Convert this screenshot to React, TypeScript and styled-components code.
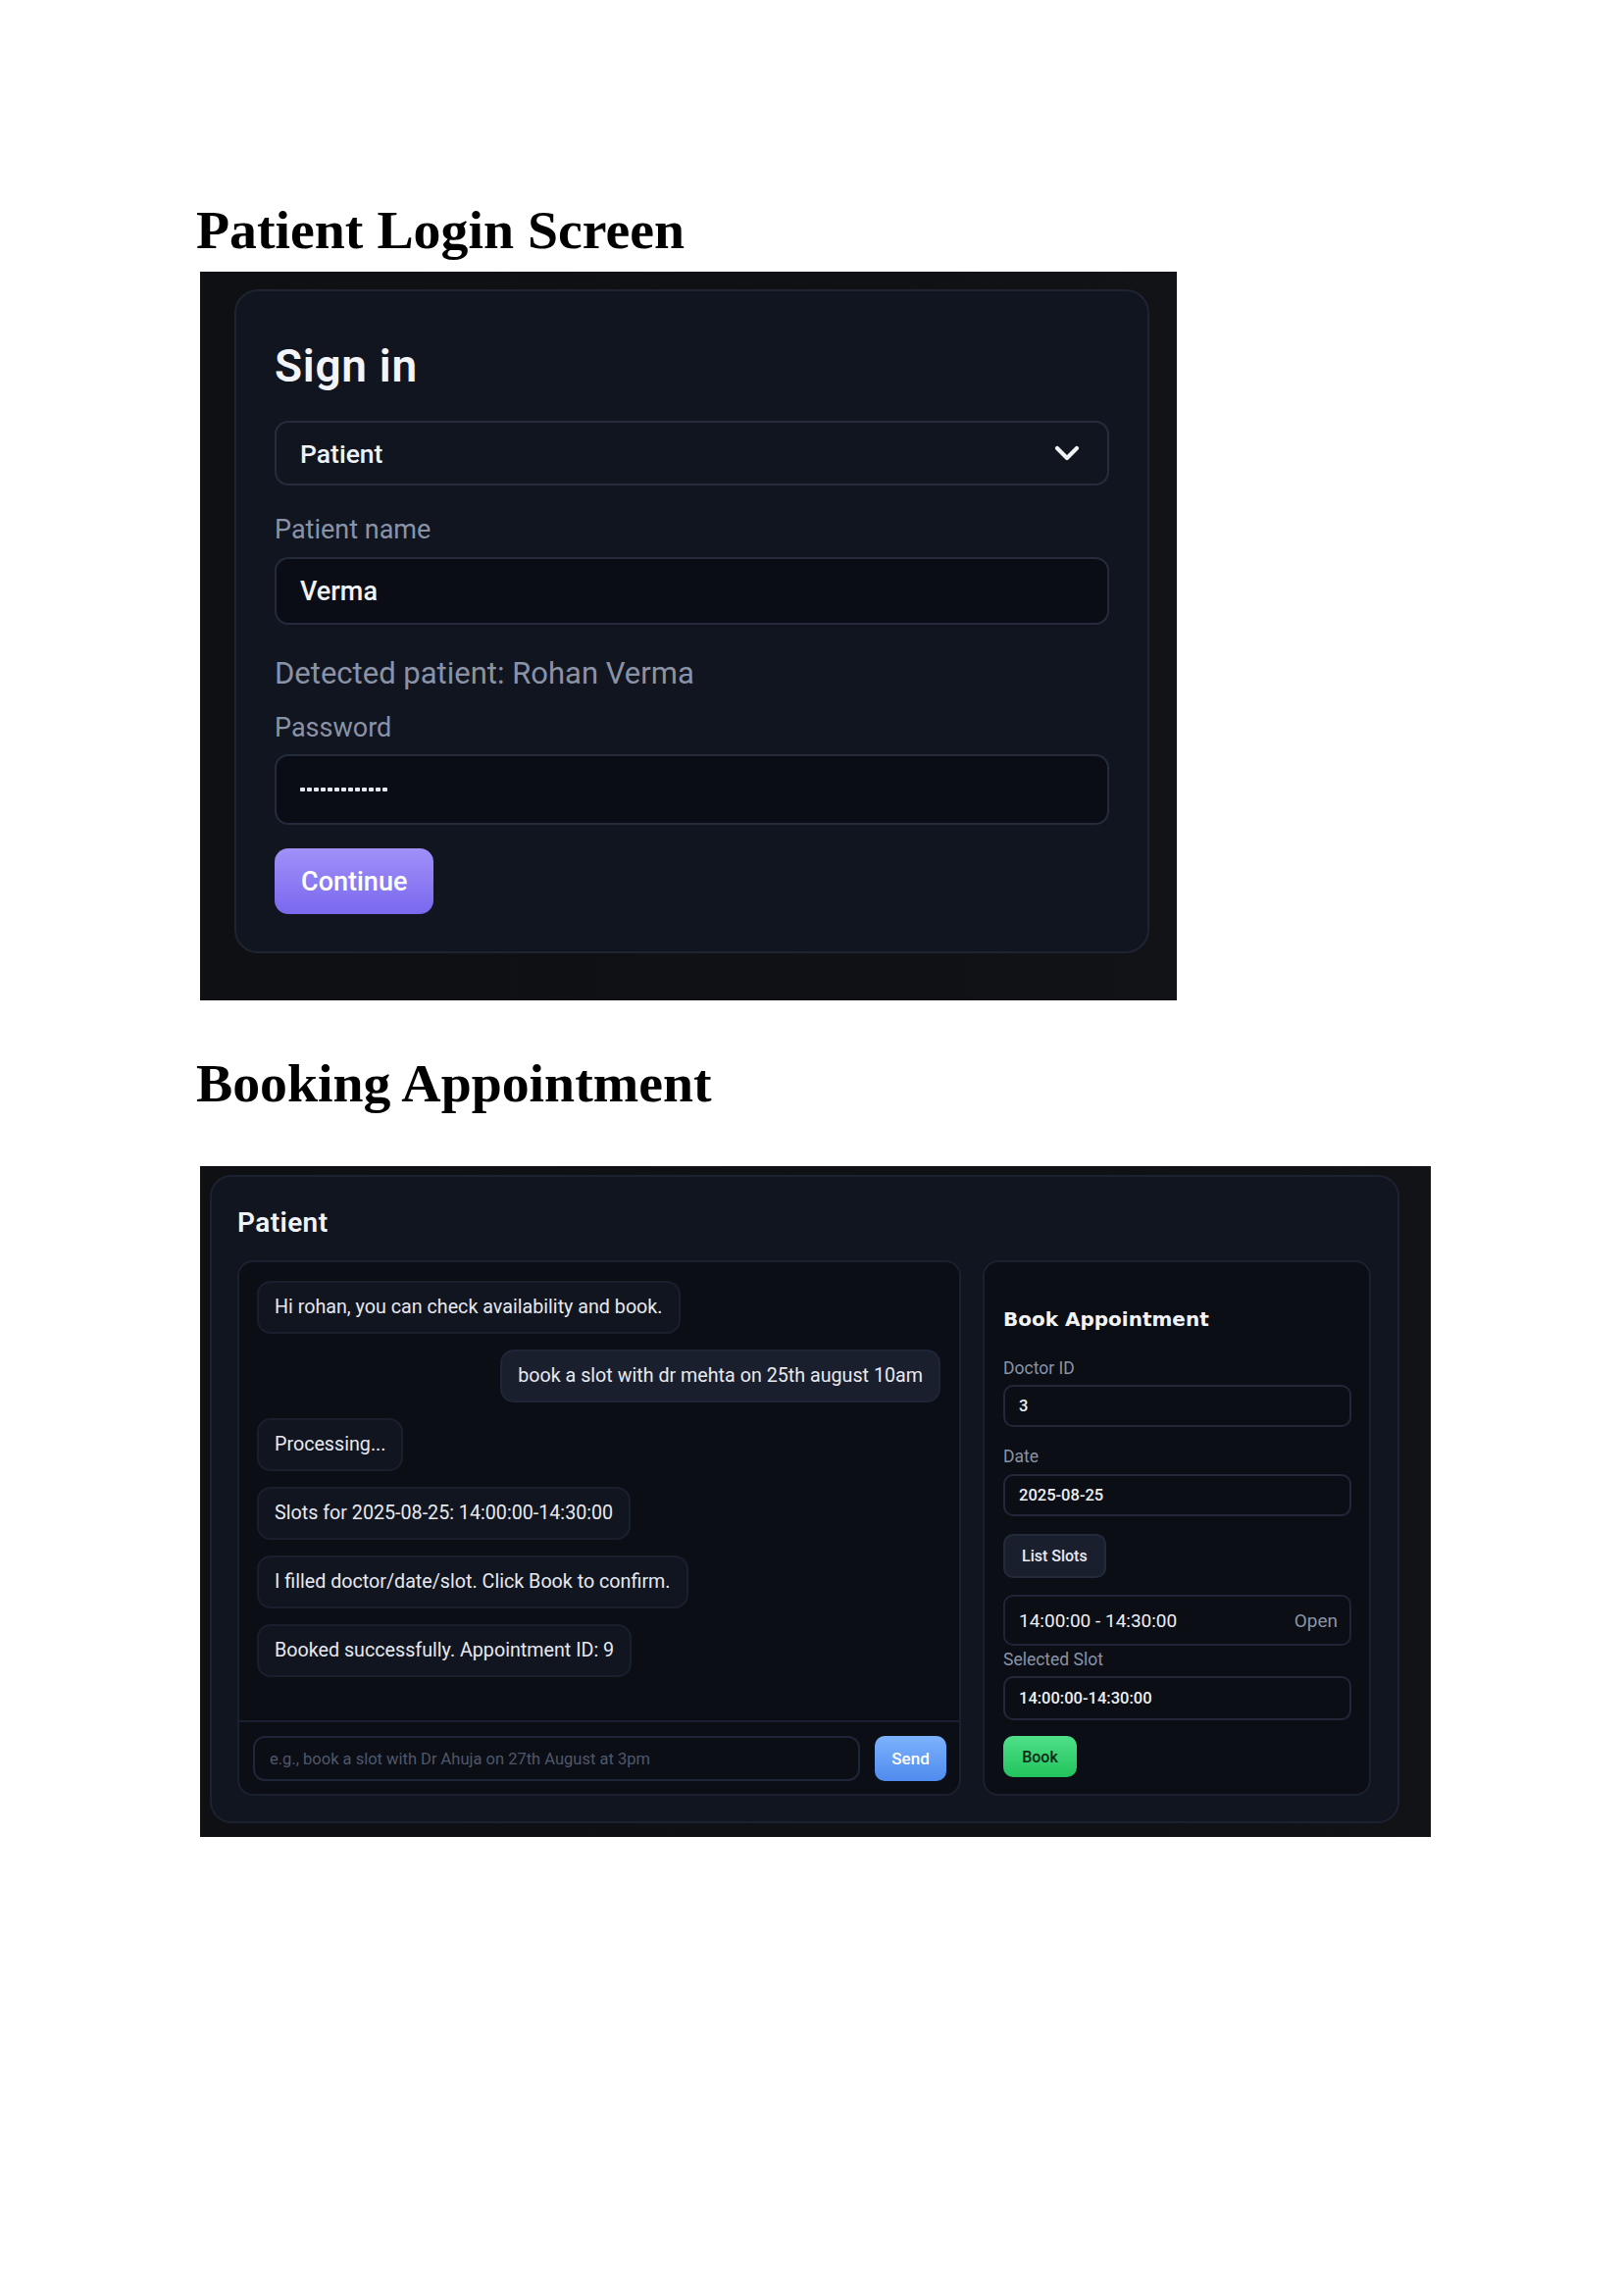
import React from "react";
import styled, { createGlobalStyle } from "styled-components";

const GlobalStyle = createGlobalStyle`
  html, body { margin: 0; padding: 0; background: #ffffff; }
  body { font-family: Roboto, "Noto Sans", Arial, sans-serif; }
  * { box-sizing: border-box; }
`;

const Page = styled.main`
  width: 1656px;
  min-height: 2339px;
  padding: 204px 0 0 200px;
  background: #ffffff;
`;

const DocHeading = styled.h1<{ $gapTop?: number }>`
  margin: ${(p) => p.$gapTop ?? 0}px 0 0 0;
  font-family: "Liberation Serif", "Times New Roman", serif;
  font-weight: 700;
  font-size: 55.8px;
  line-height: 61px;
  color: #000000;
`;

const Shot = styled.section<{ $w: number; $h: number; $gapTop: number; $pad: string }>`
  margin: ${(p) => p.$gapTop}px 0 0 4px;
  width: ${(p) => p.$w}px;
  height: ${(p) => p.$h}px;
  padding: ${(p) => p.$pad};
  background: linear-gradient(90deg, #0e1014 0%, #0f1115 70%, #111317 100%);
`;

/* ---------- Login ---------- */

const LoginCard = styled.div`
  width: 933px;
  height: 677px;
  border: 2px solid #1f2432;
  border-radius: 24px;
  background: #111520;
  padding: 49px 39px 0 39px;
  display: flex;
  flex-direction: column;
  align-items: stretch;
`;

const SignTitle = styled.h2`
  margin: 0;
  font-size: 46px;
  line-height: 54px;
  font-weight: 600;
  letter-spacing: 0.7px;
  color: #f3f4f8;
`;

const RoleSelect = styled.div`
  margin-top: 29px;
  height: 66px;
  border: 2px solid #262c3c;
  border-radius: 14px;
  background: #111520;
  padding: 0 27px 0 24px;
  display: flex;
  align-items: center;
  justify-content: space-between;
  font-size: 26.5px;
  font-weight: 500;
  color: #f1f2f6;
`;

const FieldLabel = styled.div<{ $gapTop: number }>`
  margin-top: ${(p) => p.$gapTop}px;
  font-size: 27px;
  line-height: 32px;
  color: #8a93a6;
`;

const LoginInput = styled.div<{ $gapTop: number; $h: number }>`
  margin-top: ${(p) => p.$gapTop}px;
  height: ${(p) => p.$h}px;
  border: 2px solid #252b3b;
  border-radius: 14px;
  background: #0a0d15;
  padding: 0 24px;
  display: flex;
  align-items: center;
  font-size: 27px;
  font-weight: 500;
  color: #f1f2f6;
`;

const Detected = styled.div`
  margin-top: 32px;
  font-size: 31px;
  line-height: 36px;
  color: #8a93a6;
`;

const DotRow = styled.div`
  display: flex;
  gap: 2.5px;
`;

const Dot = styled.span`
  width: 4.5px;
  height: 4.5px;
  border-radius: 1px;
  background: #e4e7ef;
`;

const ContinueButton = styled.button`
  margin-top: 24px;
  align-self: flex-start;
  height: 67px;
  padding: 0 27px;
  border: none;
  border-radius: 14px;
  background: linear-gradient(180deg, #a090f8 0%, #7a68ef 100%);
  color: #ffffff;
  font-family: Roboto, "Noto Sans", Arial, sans-serif;
  font-size: 27px;
  font-weight: 500;
`;

/* ---------- Booking ---------- */

const BookingCard = styled.div`
  width: 1213px;
  height: 661px;
  border: 2px solid #1d2230;
  border-radius: 22px;
  background: #111520;
  padding: 31px 27px 26px 26px;
  display: flex;
  flex-direction: column;
`;

const RoleTitle = styled.h2`
  margin: 0;
  font-size: 28px;
  line-height: 32px;
  font-weight: 600;
  letter-spacing: 0.4px;
  color: #f1f3f7;
`;

const Columns = styled.div`
  margin-top: 22px;
  flex: 1;
  display: grid;
  grid-template-columns: 738px 396px;
  gap: 22px;
`;

const ChatPanel = styled.div`
  border: 2px solid #1b2030;
  border-radius: 16px;
  background: #0b0e15;
  display: flex;
  flex-direction: column;
  overflow: hidden;
`;

const Messages = styled.div`
  flex: 1;
  padding: 19px 19px 0 18px;
  display: flex;
  flex-direction: column;
  align-items: flex-start;
  gap: 16px;
`;

const Bubble = styled.div<{ $mine?: boolean }>`
  align-self: ${(p) => (p.$mine ? "flex-end" : "flex-start")};
  padding: 13px 16px;
  border: 2px solid ${(p) => (p.$mine ? "#1f2536" : "#1a1f2d")};
  border-radius: 14px;
  background: ${(p) => (p.$mine ? "#1a1f2e" : "#111520")};
  font-size: 19.7px;
  line-height: 24px;
  color: #e7e9ef;
  white-space: nowrap;
`;

const Composer = styled.div`
  border-top: 2px solid #1b2030;
  padding: 14px 13px 13px 14px;
  display: flex;
  align-items: center;
  gap: 15px;
`;

const ComposerInput = styled.div`
  flex: 1;
  height: 46px;
  border: 2px solid #20263a;
  border-radius: 12px;
  background: #0b0e15;
  padding: 0 15px;
  display: flex;
  align-items: center;
  font-size: 16.5px;
  color: #50576a;
`;

const SendButton = styled.button`
  width: 73px;
  height: 46px;
  border: none;
  border-radius: 10px;
  background: linear-gradient(180deg, #7cb2fc 0%, #4f8bee 100%);
  color: #ffffff;
  font-family: Roboto, "Noto Sans", Arial, sans-serif;
  font-size: 17px;
  font-weight: 500;
`;

const BookPanel = styled.div`
  border: 2px solid #1b2030;
  border-radius: 16px;
  background: #0b0e15;
  padding: 19px 18px 17px 19px;
  display: flex;
  flex-direction: column;
  align-items: stretch;
`;

const PanelTitle = styled.h3`
  margin: 27px 0 0 0;
  font-family: "DejaVu Sans", Verdana, sans-serif;
  font-size: 20px;
  line-height: 24px;
  font-weight: 700;
  color: #f1f3f7;
`;

const SmallLabel = styled.div<{ $gapTop: number }>`
  margin-top: ${(p) => p.$gapTop}px;
  font-size: 17.5px;
  line-height: 21px;
  color: #8a93a6;
`;

const SmallField = styled.div<{ $gapTop: number; $h: number }>`
  margin-top: ${(p) => p.$gapTop}px;
  height: ${(p) => p.$h}px;
  border: 2px solid #22283a;
  border-radius: 10px;
  background: #0b0e15;
  padding: 0 14px;
  display: flex;
  align-items: center;
  font-size: 16.5px;
  font-weight: 500;
  color: #eef0f4;
`;

const ListSlotsButton = styled.button`
  margin-top: 18px;
  align-self: flex-start;
  height: 45px;
  padding: 0 17px;
  border: 2px solid #232a3a;
  border-radius: 10px;
  background: #1a1f2d;
  color: #e8eaf0;
  font-family: Roboto, "Noto Sans", Arial, sans-serif;
  font-size: 16px;
  font-weight: 500;
`;

const SlotRow = styled.div`
  margin-top: 17px;
  height: 52px;
  border: 2px solid #1f2535;
  border-radius: 10px;
  padding: 0 12px 0 14px;
  display: flex;
  align-items: center;
  justify-content: space-between;
  font-size: 19px;
  color: #eef0f4;
`;

const SlotStatus = styled.span`
  color: #8a93a6;
`;

const BookButton = styled.button`
  margin-top: 16px;
  align-self: flex-start;
  width: 75px;
  height: 42px;
  border: none;
  border-radius: 10px;
  background: linear-gradient(180deg, #4fe08a 0%, #22c35c 100%);
  color: #0b2914;
  font-family: Roboto, "Noto Sans", Arial, sans-serif;
  font-size: 16px;
  font-weight: 500;
`;

const Chevron = () => (
  <svg width="28" height="20" viewBox="0 0 28 20" aria-hidden="true">
    <polyline
      points="4,5 14,15 24,5"
      fill="none"
      stroke="#f2f3f7"
      strokeWidth="4.2"
      strokeLinecap="round"
      strokeLinejoin="round"
    />
  </svg>
);

const messages: { text: string; mine?: boolean }[] = [
  { text: "Hi rohan, you can check availability and book." },
  { text: "book a slot with dr mehta on 25th august 10am", mine: true },
  { text: "Processing..." },
  { text: "Slots for 2025-08-25: 14:00:00-14:30:00" },
  { text: "I filled doctor/date/slot. Click Book to confirm." },
  { text: "Booked successfully. Appointment ID: 9" },
];

export default function App() {
  return (
    <>
      <GlobalStyle />
      <Page>
        <DocHeading>Patient Login Screen</DocHeading>
        <Shot $w={996} $h={743} $gapTop={12} $pad="18px 0 0 35px">
          <LoginCard>
            <SignTitle>Sign in</SignTitle>
            <RoleSelect>
              <span>Patient</span>
              <Chevron />
            </RoleSelect>
            <FieldLabel $gapTop={29}>Patient name</FieldLabel>
            <LoginInput $gapTop={12} $h={69}>Verma</LoginInput>
            <Detected>Detected patient: Rohan Verma</Detected>
            <FieldLabel $gapTop={21}>Password</FieldLabel>
            <LoginInput $gapTop={11} $h={72}>
              <DotRow>
                {Array.from({ length: 13 }).map((_, i) => (
                  <Dot key={i} />
                ))}
              </DotRow>
            </LoginInput>
            <ContinueButton>Continue</ContinueButton>
          </LoginCard>
        </Shot>

        <DocHeading $gapTop={54}>Booking Appointment</DocHeading>
        <Shot $w={1255} $h={684} $gapTop={54} $pad="9px 0 0 10px">
          <BookingCard>
            <RoleTitle>Patient</RoleTitle>
            <Columns>
              <ChatPanel>
                <Messages>
                  {messages.map((m, i) => (
                    <Bubble key={i} $mine={m.mine}>
                      {m.text}
                    </Bubble>
                  ))}
                </Messages>
                <Composer>
                  <ComposerInput>e.g., book a slot with Dr Ahuja on 27th August at 3pm</ComposerInput>
                  <SendButton>Send</SendButton>
                </Composer>
              </ChatPanel>
              <BookPanel>
                <PanelTitle>Book Appointment</PanelTitle>
                <SmallLabel $gapTop={27.5}>Doctor ID</SmallLabel>
                <SmallField $gapTop={6.5} $h={43}>3</SmallField>
                <SmallLabel $gapTop={19.5}>Date</SmallLabel>
                <SmallField $gapTop={7.5} $h={43}>2025-08-25</SmallField>
                <ListSlotsButton>List Slots</ListSlotsButton>
                <SlotRow>
                  <span>14:00:00 - 14:30:00</span>
                  <SlotStatus>Open</SlotStatus>
                </SlotRow>
                <SmallLabel $gapTop={3.5}>Selected Slot</SmallLabel>
                <SmallField $gapTop={6.5} $h={45}>14:00:00-14:30:00</SmallField>
                <BookButton>Book</BookButton>
              </BookPanel>
            </Columns>
          </BookingCard>
        </Shot>
      </Page>
    </>
  );
}
